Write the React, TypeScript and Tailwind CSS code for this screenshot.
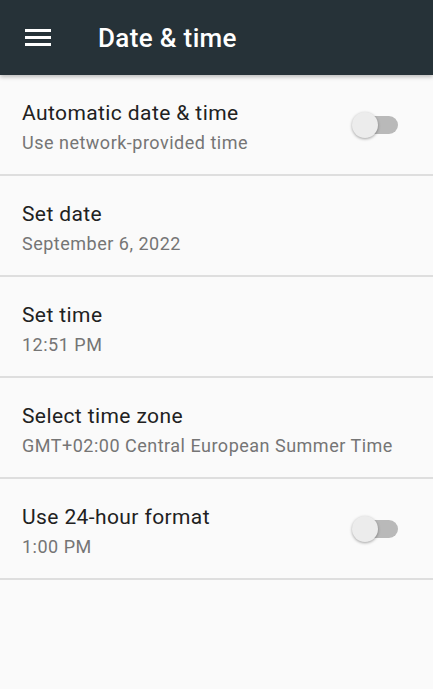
import React from "react";

function Toggle() {
  return (
    <div className="relative w-[48px] h-[28px] shrink-0">
      <div className="absolute left-[4px] top-[5px] w-[42px] h-[18px] rounded-full bg-[#b9b9b9]" />
      <div className="absolute left-0 top-[1px] w-[26px] h-[26px] rounded-full bg-[#ececec] shadow-[0_1px_3px_rgba(0,0,0,0.35)]" />
    </div>
  );
}

function Row({ title, sub, toggle }: { title: string; sub: string; toggle?: boolean }) {
  return (
    <div className="h-[101px] border-b-2 border-[#dedede] flex items-start pl-[22px] pr-[33px]">
      <div className="flex-1 pt-[24px]">
        <div className="text-[21px] leading-7 tracking-[0.4px] text-[#212121]">{title}</div>
        <div className="mt-1 text-[18px] leading-6 tracking-[0.5px] text-[#757575]">{sub}</div>
      </div>
      {toggle && (
        <div className="pt-[36px]">
          <Toggle />
        </div>
      )}
    </div>
  );
}

export default function App() {
  return (
    <div
      className="w-[433px] h-[689px] bg-[#fafafa] overflow-hidden"
      style={{ fontFamily: "Roboto, 'Noto Sans', sans-serif" }}
    >
      <div className="relative z-10 h-[75px] bg-[#263238] flex items-center shadow-[0_2px_4px_rgba(0,0,0,0.25)]">
        <div className="ml-[25px] w-[26px] flex flex-col gap-[4px]">
          <div className="h-[3px] bg-white" />
          <div className="h-[3px] bg-white" />
          <div className="h-[3px] bg-white" />
        </div>
        <div className="ml-[47px] text-[26px] font-medium tracking-[0.35px] text-white leading-none">Date &amp; time</div>
      </div>
      <div className="relative z-0">
        <Row title="Automatic date & time" sub="Use network-provided time" toggle />
        <Row title="Set date" sub="September 6, 2022" />
        <Row title="Set time" sub="12:51 PM" />
        <Row title="Select time zone" sub="GMT+02:00 Central European Summer Time" />
        <Row title="Use 24-hour format" sub="1:00 PM" toggle />
      </div>
    </div>
  );
}
